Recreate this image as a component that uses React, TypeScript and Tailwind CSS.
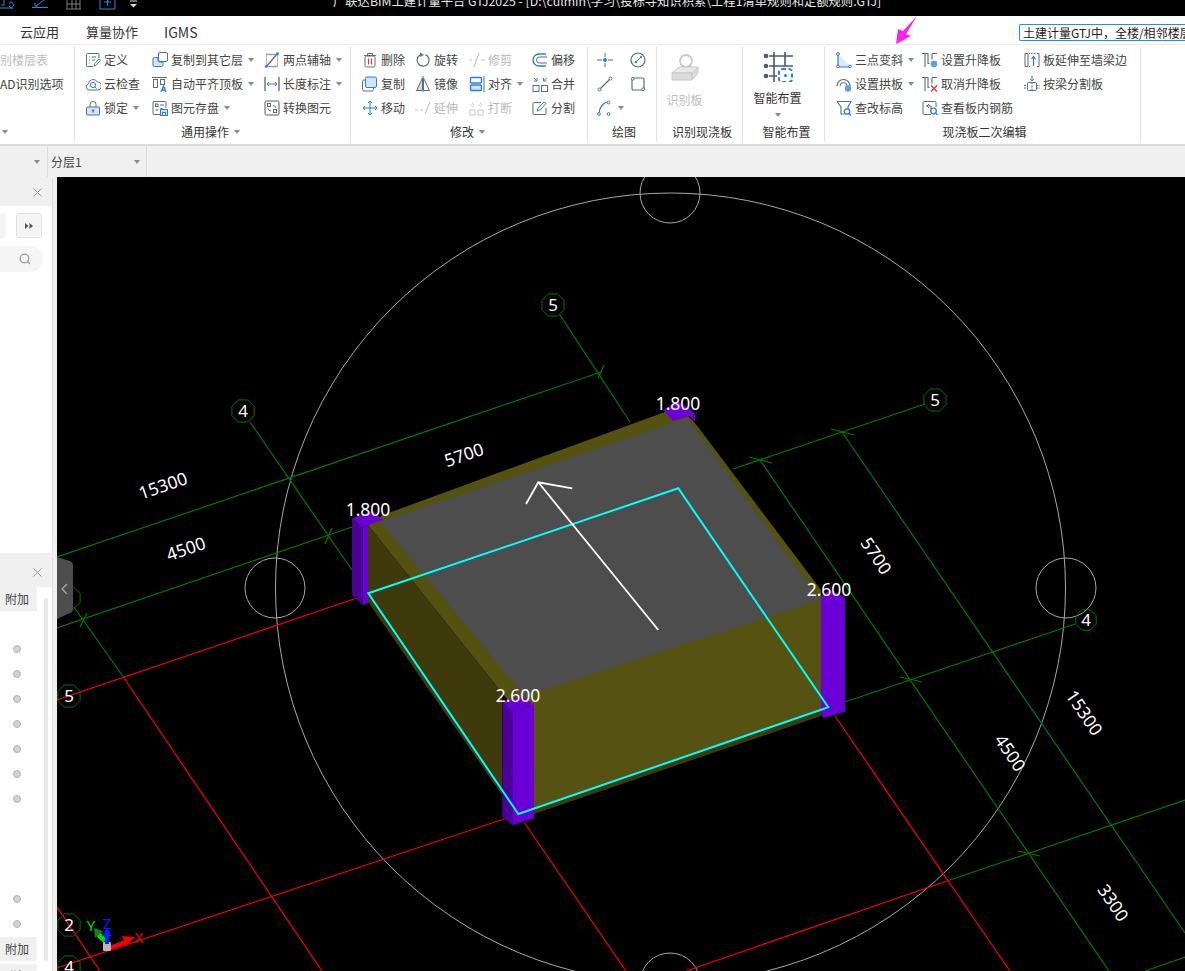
import React from "react";

const B = "#2a7de1";
const G = "#5f6b7a";
const L = "#c4c7cc";
const LB = "#d3e4fa";

type IconName = string;

function Icon({ name }: { name: IconName }) {
  const common = { fill: "none", strokeWidth: 1, stroke: G } as const;
  const parts: Record<string, React.ReactNode> = {
    define: (
      <>
        <path d="M14 6V2.5a1 1 0 0 0-1-1H2.5a1 1 0 0 0-1 1v11a1 1 0 0 0 1 1H8" {...common} />
        <path d="M4 5h1M7 5h4M4 8h1M7 8h3M4 11h1" {...common} />
        <path d="M9 14l.6-2.4L14 7l1.5 1.5-4.4 4.7z" fill="#fff" stroke={B} />
      </>
    ),
    cloud: (
      <>
        <path d="M4 14a3.2 3.2 0 0 1-.6-6.2A4.8 4.8 0 0 1 12.4 6 4 4 0 0 1 12.2 14z" {...common} />
        <circle cx="8" cy="9" r="2.6" fill="none" stroke={B} />
        <path d="M10 11l1.5 1.5" stroke={B} />
      </>
    ),
    lock: (
      <>
        <path d="M5 7V4.5a3 3 0 0 1 6 0V7" {...common} />
        <rect x="1.5" y="7" width="13" height="8" rx="1" fill={LB} stroke={G} />
        <path d="M8 9.5v3M6.8 10.5h2.4" stroke={B} strokeWidth="1.4" />
      </>
    ),
    copyTo: (
      <>
        <rect x="6.5" y="0.5" width="9" height="9" rx="1.5" fill="#fff" stroke={G} />
        <path d="M1 7a1.5 1.5 0 0 1 1.5-1.5H6v3.5a1.5 1.5 0 0 0 1.5 1H11v3a1.5 1.5 0 0 1-1.5 1.5h-7A1.5 1.5 0 0 1 1 13z" fill={LB} stroke={B} />
      </>
    ),
    flush: (
      <>
        <path d="M0 1.5h15" {...common} />
        <rect x="1.5" y="3.5" width="4" height="8" {...common} />
        <rect x="8.5" y="3.5" width="4" height="5" {...common} />
        <path d="M9 16l2.5-6 2.5 6M10 14h3" fill="none" stroke={B} strokeWidth="1.4" />
      </>
    ),
    save: (
      <>
        <path d="M8 14.5H2a1 1 0 0 1-1-1v-11a1 1 0 0 1 1-1h11a1 1 0 0 1 1 1V8" {...common} />
        <rect x="3.5" y="4" width="2.5" height="2.5" {...common} />
        <path d="M8 5h4M3.5 10h3M8.5 8.5h2" {...common} />
        <rect x="8.5" y="9.5" width="7" height="6" fill={LB} stroke={B} />
        <rect x="10.5" y="12.5" width="3" height="3" fill="#fff" stroke={B} />
      </>
    ),
    axis: (
      <>
        <path d="M3 2.5h12M3 14.5h10" stroke="#9aa1ab" strokeWidth="1.6" />
        <path d="M2 15L13.5 1.5" fill="none" stroke={G} strokeWidth="1.2" />
        <path d="M13.5 1v14M2.5 1v13" stroke="#9aa1ab" strokeWidth="0.8" />
        <circle cx="2" cy="14.5" r="1.3" fill={B} />
        <circle cx="13.5" cy="1.5" r="1.3" fill={B} />
      </>
    ),
    length: (
      <>
        <path d="M1 1v14M15 1v14" stroke="#4e5866" strokeWidth="1.2" />
        <path d="M3 8h10M5 6L3 8l2 2M11 6l2 2-2 2" fill="none" stroke={B} />
      </>
    ),
    convert: (
      <>
        <rect x="1" y="1" width="14" height="14" rx="1.5" fill="none" stroke="#4e5866" />
        <rect x="3.5" y="3.5" width="3" height="3" fill="none" stroke={G} />
        <rect x="9.5" y="9.5" width="3" height="3" fill="none" stroke={G} />
        <path d="M9 5.5a3 3 0 0 1 3 2.5M7 11a3 3 0 0 1-3-2.5" fill="none" stroke={B} />
      </>
    ),
    trash: (
      <>
        <path d="M2 3.5h12M5.5 3.5V1.5h5v2" {...common} />
        <rect x="3" y="4" width="10" height="11" rx="1.5" {...common} />
        <path d="M6.5 6.5v6M9.5 6.5v6" stroke="#d93a2b" strokeWidth="1.2" />
      </>
    ),
    copy: (
      <>
        <rect x="0.5" y="4" width="11" height="11" rx="1.5" fill="#fff" stroke={G} />
        <rect x="3.5" y="1" width="11" height="10.5" rx="1.5" fill={LB} stroke={B} />
      </>
    ),
    move: (
      <path d="M8 1v14M1 8h14M6 3l2-2 2 2M6 13l2 2 2-2M3 6L1 8l2 2M13 6l2 2-2 2" fill="none" stroke={B} />
    ),
    rotate: (
      <>
        <path d="M10.5 2.6A6 6 0 1 1 5 3" fill="none" stroke={G} strokeWidth="1.2" />
        <path d="M5 0.5L9 3 5 5z" fill={B} />
      </>
    ),
    mirror: (
      <>
        <path d="M7.5 2L1.5 14.5h6z" fill="#d6d9de" stroke={G} />
        <path d="M8.5 2l6 12.5h-6z" fill="none" stroke={G} />
        <path d="M8 0v16" stroke={B} strokeDasharray="2 1" />
      </>
    ),
    extend: <path d="M0 10h3M5 10h3M10 14L15 2" fill="none" stroke={L} strokeWidth="1.2" />,
    trim: <path d="M0 8h3M12 8h4M5 15L10 1M6 8h2" fill="none" stroke={L} strokeWidth="1.2" />,
    align: (
      <>
        <rect x="1.5" y="1.5" width="11" height="5.5" rx="1" fill="#fff" stroke={B} strokeWidth="1.4" />
        <rect x="1.5" y="9" width="11" height="5.5" rx="1" fill={LB} stroke={B} strokeWidth="1.4" />
        <path d="M15 0v16" stroke={G} />
      </>
    ),
    breakIcon: (
      <>
        <rect x="1" y="10" width="5" height="5" fill="none" stroke={L} />
        <rect x="9" y="10" width="5" height="5" fill="none" stroke={L} />
        <path d="M3.5 3v4M11.5 3v4M1 5h5M9 5h5" stroke={L} strokeDasharray="1.5 1.5" />
      </>
    ),
    offset: (
      <>
        <path d="M14 2H7a6 6 0 0 0 0 12h7" fill="none" stroke={B} strokeWidth="1.3" />
        <path d="M15 5H7.5a3 3 0 0 0 0 6H15" fill="none" stroke={G} />
      </>
    ),
    merge: (
      <>
        <rect x="1" y="9.5" width="6" height="6" fill="none" stroke={G} />
        <rect x="9.5" y="9.5" width="6" height="6" fill="none" stroke={G} />
        <path d="M2 2l3 3M2 5h3V2M14.500 2l-3 3M14.500 5h-3V2" fill="none" stroke={B} />
      </>
    ),
    split: (
      <>
        <path d="M9 2.500H2a1 1 0 0 0-1 1v10a1 1 0 0 0 1 1h11a1 1 0 0 0 1-1V8" {...common} />
        <path d="M5 11l1-3 6-6 2 1.500-6 6.500z" fill="none" stroke={B} />
      </>
    ),
    point: (
      <>
        <path d="M0 8h5M11 8h5M8 1v4M8 11v4" stroke={G} />
        <circle cx="8" cy="8" r="2" fill={B} />
      </>
    ),
    gauge: (
      <>
        <circle cx="8" cy="8" r="7" fill="none" stroke={G} strokeWidth="1.2" />
        <path d="M6 10l5-5" stroke={B} />
        <circle cx="6" cy="10" r="1.3" fill={B} />
        <circle cx="11" cy="5" r="1.1" fill={B} />
      </>
    ),
    line: (
      <>
        <path d="M2 14L14 2" stroke={G} strokeWidth="1.2" />
        <circle cx="2.500" cy="13.500" r="1.500" fill="#fff" stroke={B} />
        <circle cx="13.500" cy="2.500" r="1.500" fill="#fff" stroke={B} />
      </>
    ),
    rect: (
      <>
        <rect x="2" y="2" width="12" height="12" rx="1.500" fill="none" stroke={G} strokeWidth="1.2" />
        <circle cx="2.800" cy="2.800" r="1.400" fill="#fff" stroke={B} />
        <circle cx="13.200" cy="13.200" r="1.400" fill="#fff" stroke={B} />
      </>
    ),
    arc: (
      <>
        <path d="M2 14C2 8 6 2.500 11 2" fill="none" stroke={G} strokeWidth="1.2" />
        <circle cx="2" cy="14" r="1.400" fill="#fff" stroke={B} />
        <circle cx="11.500" cy="2.500" r="1.400" fill="#fff" stroke={B} />
        <circle cx="11.500" cy="14" r="1.400" fill="#fff" stroke={B} />
      </>
    ),
    threePoint: (
      <>
        <path d="M2 2l13 13H2z" fill="#dce9f8" />
        <path d="M2 2v13h12" fill="none" stroke={B} strokeWidth="1.2" />
        <circle cx="2" cy="2" r="1.400" fill="#fff" stroke={B} />
        <circle cx="2" cy="14.500" r="1.400" fill="#fff" stroke={B} />
        <circle cx="14" cy="14.500" r="1.400" fill="#fff" stroke={B} />
      </>
    ),
    archSet: (
      <>
        <path d="M1 10a6.500 6.500 0 0 1 13 0" fill="none" stroke={G} strokeWidth="1.2" />
        <path d="M4 10a3.500 3.500 0 0 1 7 0" fill="none" stroke={G} />
        <circle cx="12" cy="12.500" r="3.200" fill={B} fillOpacity="0.75" />
      </>
    ),
    elevation: (
      <>
        <path d="M1 1.500h14L12 7v4.500M1 1.500L5 7v7h3" fill="none" stroke={G} strokeWidth="1.1" />
        <circle cx="11" cy="11.500" r="2.700" fill="#fff" stroke={B} strokeWidth="1.300" />
        <path d="M13 13.500l2 2" stroke={B} strokeWidth="1.300" />
      </>
    ),
    drop: (
      <>
        <path d="M0 1.500h6v10h1.500M3 1.500v13.500M10 1.500h5M10 1.500v6" fill="none" stroke={G} strokeWidth="1.100" />
        <circle cx="12" cy="12" r="3.300" fill={B} fillOpacity="0.75" />
      </>
    ),
    dropCancel: (
      <>
        <path d="M0 1.500h6v10h1.500M3 1.500v13.500M10 1.500h5M10 1.500v6" fill="none" stroke={G} strokeWidth="1.100" />
        <path d="M9 9.500l6 6M15 9.500l-6 6" stroke="#e0392c" strokeWidth="1.400" />
      </>
    ),
    viewRebar: (
      <>
        <path d="M9 14.500H2a1 1 0 0 1-1-1v-11a1 1 0 0 1 1-1h11a1 1 0 0 1 1 1V7" {...common} />
        <path d="M4 6h5v3M7 4l-2 2 2 2" fill="none" stroke={G} />
        <circle cx="11.500" cy="11" r="2.800" fill="#fff" stroke={B} strokeWidth="1.300" />
        <path d="M13.500 13l2 2" stroke={B} strokeWidth="1.300" />
      </>
    ),
    extendBoard: (
      <>
        <path d="M1 1.500h3v13H1zM5 1.500h1M5 14.500h1" fill="none" stroke={G} />
        <path d="M13 1.500h2v13h-2" fill="none" stroke={G} />
        <path d="M9.500 14V5M7.500 7l2-2.500 2 2.500" fill="none" stroke={B} strokeWidth="1.200" />
        <path d="M7 1.500h5" stroke={G} strokeDasharray="1.500 1.500" />
      </>
    ),
    splitBeam: (
      <>
        <path d="M8 0v5M6 3l2 2 2-2" fill="none" stroke={B} />
        <rect x="3.500" y="6.500" width="9" height="8" rx="1" fill="none" stroke={G} />
        <path d="M0 9.500h3.500M0 12h3.500M12.500 9.500H16M12.500 12H16M8 6.500v8" stroke={G} strokeDasharray="2 1" />
      </>
    ),
  };
  return (
    <svg viewBox="0 0 16 16" className="w-4 h-4 shrink-0">
      {parts[name]}
    </svg>
  );
}

function Caret() {
  return <span className="inline-block w-0 h-0 border-x-[3px] border-x-transparent border-t-[4px] border-t-[#8a8a8a] ml-[5px] shrink-0" />;
}

type Item = { i?: string; t?: string; caret?: boolean; dim?: boolean };

function Cell({ it }: { it: Item }) {
  return (
    <div className={`h-6 flex items-center whitespace-nowrap ${it.dim ? "text-[#b8b8b8]" : "text-[#444]"}`}>
      {it.i && <Icon name={it.i} />}
      {it.t && <span className="ml-[3px]">{it.t}</span>}
      {it.caret && <Caret />}
    </div>
  );
}

function Col({ w, items }: { w: string; items: Item[] }) {
  return (
    <div className={`flex flex-col ${w}`}>
      {items.map((it, k) => (
        <Cell key={k} it={it} />
      ))}
    </div>
  );
}

function Label({ text, caret, cls }: { text: string; caret?: boolean; cls: string }) {
  return (
    <div className={`h-5 mt-[2px] flex items-center text-[#333] ${cls}`}>
      {text}
      {caret && <Caret />}
    </div>
  );
}

function Smart() {
  return (
    <svg viewBox="0 0 30 30" className="w-[30px] h-[30px]">
      <path d="M6 4h24M6 14h24M6 24h8M11 0v30M22 0v8M22 8v6" stroke="#4e5866" strokeWidth="1.600" fill="none" />
      <circle cx="3" cy="4" r="2.300" fill="#4e5866" />
      <circle cx="3" cy="14" r="2.300" fill="#4e5866" />
      <circle cx="3" cy="24" r="2.300" fill="#4e5866" />
      <rect x="16" y="17" width="13" height="13" rx="3" fill="#fff" stroke={B} strokeWidth="2" strokeDasharray="4 2.500" />
      <circle cx="22.500" cy="23.500" r="1.500" fill={B} />
    </svg>
  );
}

function Recog() {
  return (
    <svg viewBox="0 0 28 30" className="w-7 h-[30px]">
      <circle cx="15" cy="8" r="6" fill="none" stroke="#c9c9c9" strokeWidth="1.800" />
      <path d="M19 13l4 4" stroke="#c9c9c9" strokeWidth="2" />
      <path d="M1 20l7-6h19l-6 6z" fill="#e9e9e9" stroke="#c9c9c9" />
      <path d="M1 20h20v7H1zM21 20l6-6v6l-6 7z" fill="#dcdcdc" stroke="#c9c9c9" />
    </svg>
  );
}

function Octagon({ cx, cy, r = 12, t }: { cx: number; cy: number; r?: number; t: string }) {
  const pts = Array.from({ length: 8 }, (_, k) => {
    const a = Math.PI / 8 + (k * Math.PI) / 4;
    return `${cx + r * Math.cos(a)},${cy + r * Math.sin(a)}`;
  }).join(" ");
  return (
    <g>
      <polygon points={pts} fill="none" stroke="#007a00" strokeWidth="1" />
      {t && (
        <text x={cx} y={cy + 6} textAnchor="middle" fill="#fff" fontSize="17">
          {t}
        </text>
      )}
    </g>
  );
}

function Dim({ x, y, a, t }: { x: number; y: number; a: number; t: string }) {
  return (
    <text x={x} y={y + 6} textAnchor="middle" fill="#fff" fontSize="17.500" transform={`rotate(${a} ${x} ${y})`}>
      {t}
    </text>
  );
}

function Canvas() {
  const green = [
    "M57 557L601 372",
    "M57 628L352 527",
    "M250 422L352 570",
    "M74 607L124 678",
    "M560 315L630 422",
    "M733 469L925 404",
    "M845 702L1075 624",
    "M947 881L1185 800",
    "M1145 971L1185 957",
    "M760 460L1109 971",
    "M842 432L1185 933",
    "M332 528L325 544",
    "M87 613L80 627",
    "M604 365L598 378",
    "M831 429L854 435",
    "M749 457L772 463",
    "M900 677L922 682",
    "M1018 851L1040 856",
  ];
  const red = [
    "M57 700L357 598",
    "M57 968L507 818",
    "M686 971L947 881",
    "M124 678L322 971",
    "M57 907L100 971",
    "M524 822L626 971",
    "M835 716L1010 971",
  ];
  return (
    <svg viewBox="57 177 1128 794" className="w-[1128px] h-[794px] block bg-black font-['Noto_Sans',sans-serif]">
      <circle cx="670.500" cy="588" r="395" fill="none" stroke="#a8a8a8" />
      <circle cx="670" cy="193" r="30" fill="none" stroke="#a8a8a8" />
      <circle cx="275" cy="588" r="30" fill="none" stroke="#a8a8a8" />
      <circle cx="1066" cy="588" r="30" fill="none" stroke="#a8a8a8" />
      <circle cx="670" cy="983" r="30" fill="none" stroke="#a8a8a8" />
      {green.map((d) => (
        <path key={d} d={d} stroke="#007a00" fill="none" strokeWidth="1.200" />
      ))}
      {red.map((d) => (
        <path key={d} d={d} stroke="#f00000" fill="none" strokeWidth="1.300" />
      ))}
      <Octagon cx={69} cy={598} t="" />
      <Octagon cx={553} cy={305} t="5" />
      <Octagon cx={243} cy={411} t="4" />
      <Octagon cx={935} cy={400} t="5" />
      <Octagon cx={1086} cy={620} r={11} t="4" />
      <Octagon cx={69} cy={696} t="5" />
      <Octagon cx={69} cy={925} t="2" />
      <Octagon cx={69} cy={967} t="4" />

      <Dim x={163} y={486} a={-19} t="15300" />
      <Dim x={186} y={549} a={-19} t="4500" />
      <Dim x={464} y={455} a={-19} t="5700" />
      <Dim x={876} y={556} a={56} t="5700" />
      <Dim x={1010} y={753} a={56} t="4500" />
      <Dim x={1084} y={713} a={56} t="15300" />
      <Dim x={1113} y={903} a={56} t="3300" />

      {/* slab */}
      <polygon points="368,525 383,515 665,412 688,416 695,423 821,590 821,603 534,706 512,705 502,693" fill="#55510f" />
      <polygon points="368,525 502,693 502,795 368,602" fill="#3f3a0c" />
      <polygon points="380,521.700 687,418.300 820,600 525,696.700" fill="#4d4d4d" />
      <polygon points="534,693 821,600 821,710 534,812" fill="#565211" />
      <polygon points="534,808 828,707 821,716 534,814" fill="#3f3a0c" />

      {/* posts */}
      <polygon points="352,518.300 373,511 383,520 368,525 362.700,528" fill="#6a00d5" />
      <polygon points="352,518.300 362.700,528 362.700,605 352,595" fill="#4b0096" />
      <polygon points="362.700,528 368,525 368,603 362.700,605" fill="#6a00d5" />
      <polygon points="663.400,410 678,401 691,410 695,414 695,422 689.500,416 672.800,421" fill="#6a00d5" />
      <polygon points="821,596 830,590 845,597 845,711.700 823,718 821,712" fill="#6a00d5" />
      <polygon points="502.300,701.700 512.300,711.700 512.300,825 502.300,816.700" fill="#4b0096" />
      <polygon points="512.300,711.700 534,705 534,818.300 512.300,825" fill="#6a00d5" />
      <polygon points="502.300,701.700 522,696 534,705 512.300,711.700" fill="#6a00d5" />

      <polygon points="368.300,593.300 678.300,488.300 828.300,707.300 518.300,814" fill="none" stroke="#00ffff" strokeWidth="2" />
      <path d="M658.300 630L538.300 482.300M526 504L538.300 482.300L572.300 488.300" fill="none" stroke="#fff" strokeWidth="1.800" />

      <text x="368" y="516" textAnchor="middle" fill="#fff" fontSize="17.500">1.800</text>
      <text x="678" y="410" textAnchor="middle" fill="#fff" fontSize="17.500">1.800</text>
      <text x="829" y="596" textAnchor="middle" fill="#fff" fontSize="17.500">2.600</text>
      <text x="518" y="702" textAnchor="middle" fill="#fff" fontSize="17.500">2.600</text>

      {/* grip */}
      <path d="M57 557L70 561Q73 562 73 565V609Q73 612 70 613L57 619Z" fill="#4d4d4d" />
      <path d="M67 584L62 589L67 594" fill="none" stroke="#aaa" strokeWidth="1.200" />

      {/* gizmo */}
      <path d="M110 948L125 942" stroke="#ff0000" strokeWidth="4" />
      <polygon points="122,936 135,937 126,946" fill="#ee0000" />
      <path d="M105 941L98 934" stroke="#00e000" strokeWidth="5" />
      <polygon points="94,928 103,931 95,938" fill="#108010" />
      <rect x="103" y="942" width="8" height="9" rx="1" fill="#b8b8b8" />
      <path d="M107 944V933" stroke="#0020ff" strokeWidth="4" />
      <polygon points="107,927 112,936 102,936" fill="#0020ff" />
      <text x="91" y="931" textAnchor="middle" fill="#00e000" fontSize="15">Y</text>
      <text x="107" y="929" textAnchor="middle" fill="#0020ff" fontSize="15">Z</text>
      <text x="139" y="943" textAnchor="middle" fill="#f00000" fontSize="15">X</text>
    </svg>
  );
}

function Dot() {
  return <span className="block w-2 h-2 rounded-full bg-[#d2d2d2] border border-[#b4b4b4]" />;
}

function CloseX() {
  return (
    <svg viewBox="0 0 10 10" className="w-[9px] h-[9px]">
      <path d="M0.500 0.500L9.500 9.500M9.500 0.500L0.500 9.500" stroke="#8f8f8f" strokeWidth="1" />
    </svg>
  );
}

export default function App() {
  return (
    <div className="relative w-[1185px] h-[971px] overflow-hidden bg-[#f0f0f0] text-[12px] font-['Noto_Sans_CJK_SC',sans-serif]">
      {/* title bar */}
      <div className="h-4 bg-black overflow-hidden flex">
        <svg viewBox="0 0 140 16" className="w-[140px] h-4 shrink-0">
          <path d="M0 8H13M4 0V5H1M9 3.500A2.500 2.500 0 1 1 9 6L12 9" fill="none" stroke="#2a85e8" />
          <path d="M32 7.500H48M36 6L44 0M35 3V6H38" fill="none" stroke="#2a85e8" />
          <path d="M66 9H81M67 0V9M80 0V9M72 0V9M76 0V9M67 4H80" fill="none" stroke="#7d7d7d" />
          <path d="M100 0V9H115V0M104 2H111M107.500 0V6" fill="none" stroke="#2a85e8" />
          <path d="M130 1H137" stroke="#ddd" />
          <path d="M130 4H137L133.500 7.500Z" fill="#ddd" />
        </svg>
        <div className="ml-[193px] -mt-[9px] text-[12.300px] leading-5 text-[#e8e8e8] whitespace-nowrap">
          广联达BIM土建计量平台 GTJ2025 - [D:\culmin\学习\投标寻知识积累\工程1清单规则和定额规则.GTJ]
        </div>
      </div>

      {/* tabs */}
      <div className="h-[29px] bg-white border-b border-[#ececec] flex items-center pt-[4px] text-[13px] text-[#333] overflow-hidden">
        <span className="ml-5">云应用</span>
        <span className="ml-[27px]">算量协作</span>
        <span className="ml-[26px] text-[14px]">IGMS</span>
        <div className="ml-auto w-[166px] h-[17px] bg-white border border-[#1890ff] border-r-0 rounded-l-[2px] pl-[3px] text-[12px] leading-[15px] whitespace-nowrap overflow-hidden text-[#222]">
          土建计量GTJ中，全楼/相邻楼层构件
        </div>
      </div>

      {/* ribbon */}
      <div className="h-[101px] bg-white border-b-2 border-[#dcdcdc] flex pt-[2px]">
        <div className="w-[75px] h-[95px] border-r border-[#e2e2e2] pt-px">
          <div className="h-6 flex items-center text-[#bdbdbd]">别楼层表</div>
          <div className="h-6 flex items-center text-[#444] whitespace-nowrap">AD识别选项</div>
          <div className="h-6" />
          <Label text="" caret cls="-ml-[3px]" />
        </div>

        <div className="w-[276px] h-[95px] border-r border-[#e2e2e2] pt-px">
          <div className="flex pl-[10px]">
            <Col w="w-[67px]" items={[{ i: "define", t: "定义" }, { i: "cloud", t: "云检查" }, { i: "lock", t: "锁定", caret: true }]} />
            <Col w="w-[112px]" items={[{ i: "copyTo", t: "复制到其它层", caret: true }, { i: "flush", t: "自动平齐顶板", caret: true }, { i: "save", t: "图元存盘", caret: true }]} />
            <Col w="w-[80px]" items={[{ i: "axis", t: "两点辅轴", caret: true }, { i: "length", t: "长度标注", caret: true }, { i: "convert", t: "转换图元" }]} />
          </div>
          <Label text="通用操作" caret cls="pl-[106px]" />
        </div>

        <div className="w-[237px] h-[95px] border-r border-[#e2e2e2] pt-px">
          <div className="flex pl-[11px]">
            <Col w="w-[53px]" items={[{ i: "trash", t: "删除" }, { i: "copy", t: "复制" }, { i: "move", t: "移动" }]} />
            <Col w="w-[54px]" items={[{ i: "rotate", t: "旋转" }, { i: "mirror", t: "镜像" }, { i: "extend", t: "延伸", dim: true }]} />
            <Col w="w-[63px]" items={[{ i: "trim", t: "修剪", dim: true }, { i: "align", t: "对齐", caret: true }, { i: "breakIcon", t: "打断", dim: true }]} />
            <Col w="w-[50px]" items={[{ i: "offset", t: "偏移" }, { i: "merge", t: "合并" }, { i: "split", t: "分割" }]} />
          </div>
          <Label text="修改" caret cls="pl-[99px]" />
        </div>

        <div className="w-[69px] h-[95px] border-r border-[#e2e2e2] pt-px">
          <div className="flex pl-[9px]">
            <Col w="w-[33px]" items={[{ i: "point" }, { i: "line" }, { i: "arc", caret: true }]} />
            <Col w="w-[20px]" items={[{ i: "gauge" }, { i: "rect" }]} />
          </div>
          <Label text="绘图" cls="justify-center pl-[4px]" />
        </div>

        <div className="w-[86px] h-[95px] border-r border-[#e2e2e2] pt-px">
          <div className="h-[72px] flex flex-col items-center pt-[5px] pr-[30px]">
            <Recog />
            <span className="mt-[8px] text-[#bdbdbd]">识别板</span>
          </div>
          <Label text="识别现浇板" cls="justify-center pl-[5px]" />
        </div>

        <div className="w-[82px] h-[95px] border-r border-[#e2e2e2] pt-px">
          <div className="h-[72px] flex flex-col items-center pt-[4px] pr-[12px]">
            <Smart />
            <span className="mt-[7px] text-[#333]">智能布置</span>
            <span className="mt-[6px] w-0 h-0 border-x-[3px] border-x-transparent border-t-[4px] border-t-[#8a8a8a]" />
          </div>
          <Label text="智能布置" cls="justify-center pl-[6px]" />
        </div>

        <div className="w-[316px] h-[95px] border-r border-[#e2e2e2] pt-px">
          <div className="flex pl-[11px]">
            <Col w="w-[86px]" items={[{ i: "threePoint", t: "三点变斜", caret: true }, { i: "archSet", t: "设置拱板", caret: true }, { i: "elevation", t: "查改标高" }]} />
            <Col w="w-[102px]" items={[{ i: "drop", t: "设置升降板" }, { i: "dropCancel", t: "取消升降板" }, { i: "viewRebar", t: "查看板内钢筋" }]} />
            <Col w="w-[110px]" items={[{ i: "extendBoard", t: "板延伸至墙梁边" }, { i: "splitBeam", t: "按梁分割板" }]} />
          </div>
          <Label text="现浇板二次编辑" cls="justify-center pl-[4px]" />
        </div>
      </div>

      {/* selector bar */}
      <div className="h-[31px] flex text-[#444]">
        <div className="w-[48px] border-r border-[#dcdcdc] flex items-center justify-end pr-[7px]">
          <Caret />
        </div>
        <div className="w-[99px] border-r border-[#dcdcdc] flex items-center justify-between pl-[3px] pr-[6px]">
          <span>分层1</span>
          <Caret />
        </div>
      </div>

      {/* body */}
      <div className="flex h-[794px]">
        <div className="w-[57px] shrink-0 flex flex-col">
          <div className="mt-px w-[53px] h-[375px] shrink-0 bg-white border-r border-[#dcdcdc]">
            <div className="h-7 bg-[#f0f0f0] flex items-center justify-end pr-[10px]">
              <CloseX />
            </div>
            <div className="mt-[7px] flex justify-between pr-[10px]">
              <div className="w-[6px] h-[25px] bg-[#f4f4f4] rounded-r-[3px]" />
              <div className="w-[26px] h-[25px] bg-[#f5f5f5] border border-[#e0e0e0] rounded-[3px] flex items-center justify-center">
                <svg viewBox="0 0 8 6" className="w-2 h-[6px]">
                  <path d="M0 0L3.500 3L0 6ZM4.500 0L8 3L4.500 6Z" fill="#555" />
                </svg>
              </div>
            </div>
            <div className="mt-2 mr-[9px] h-[26px] bg-[#f5f5f5] rounded-r-[13px] flex items-center justify-end pr-[12px]">
              <svg viewBox="0 0 12 12" className="w-3 h-3">
                <circle cx="5.500" cy="5.500" r="4.300" fill="none" stroke="#9a9a9a" strokeWidth="1.300" />
                <path d="M8.500 8.500L11 11" stroke="#9a9a9a" strokeWidth="1.300" />
              </svg>
            </div>
          </div>
          <div className="mt-[5px] w-[53px] flex-1 min-h-0 overflow-hidden bg-white border-r border-[#dcdcdc]">
            <div className="h-[29px] bg-[#f0f0f0] flex items-center justify-end pr-[10px]">
              <CloseX />
            </div>
            <div className="flex">
              <div className="w-[44px]">
                <div className="w-[37px] h-[24px] bg-[#f0f0f0] text-[#444] flex items-center pl-[5px]">附加</div>
                <div className="pl-[13px] pt-[34px] flex flex-col gap-[17px]">
                  <Dot /><Dot /><Dot /><Dot /><Dot /><Dot /><Dot />
                </div>
                <div className="pl-[13px] pt-[92px] flex flex-col gap-[17px]">
                  <Dot /><Dot />
                </div>
                <div className="mt-[9px] w-[37px] h-[24px] bg-[#f0f0f0] text-[#444] flex items-center pl-[5px]">附加</div>
                <div className="mt-[3px] w-[37px] h-[24px] bg-[#f0f0f0] text-[#444] flex items-center pl-[5px]">附加</div>
              </div>
              <div className="w-[4px] h-[363px] mt-[11px] bg-[#e8e8e8] rounded-full" />
            </div>
          </div>
        </div>
        <Canvas />
      </div>

      {/* magenta annotation arrow */}
      <svg viewBox="0 0 30 30" className="absolute left-[889px] top-[16px] w-[30px] h-[30px]">
        <path d="M28 0L14 15L9 13L7 28L22 20L17 18Z" fill="#ff20f0" />
      </svg>
    </div>
  );
}
